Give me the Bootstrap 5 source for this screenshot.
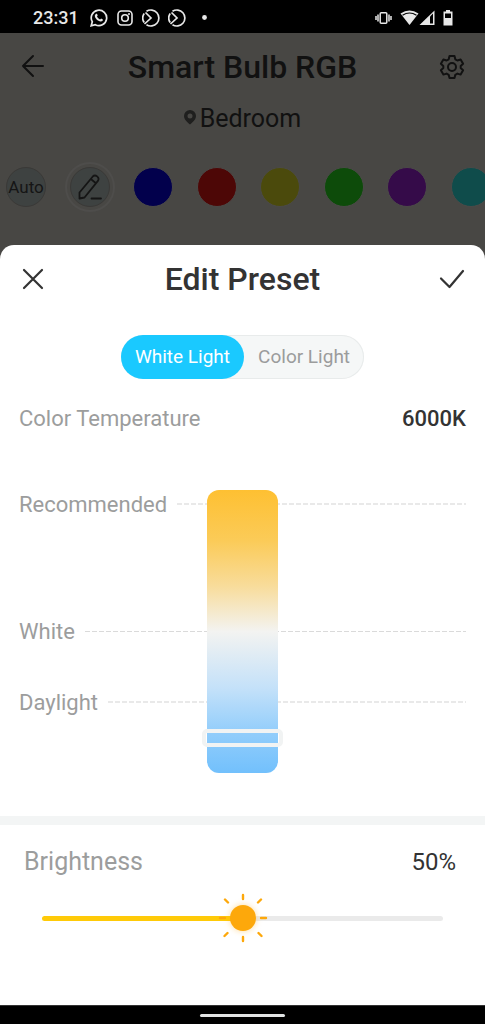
<!DOCTYPE html>
<html lang="en">
<head>
<meta charset="utf-8">
<meta name="viewport" content="width=device-width, initial-scale=1">
<title>Edit Preset</title>
<link href="https://cdn.jsdelivr.net/npm/bootstrap@5.3.0/dist/css/bootstrap.min.css" rel="stylesheet">
<style>
  body { font-family: Roboto, "Liberation Sans", sans-serif; background: #484744; color: #333; line-height: 1.2; }
  svg { display: block; fill: none; stroke: currentColor; }
  .status-bar { background: #000; color: #e8e8e8; height: 33px; padding: 2px 32px 0 33px; }
  .clock { font-size: 18px; font-weight: 500; margin-right: 11px; }
  .device { color: #111; height: 212px; }
  .top-row { height: 68px; padding: 0 20px; }
  .screen-title { font-size: 32px; font-weight: 500; }
  .plain-btn { width: 26px; height: 26px; padding: 0; border: 0; background: none; color: inherit; }
  .room { font-size: 25px; height: 32px; }
  .swatches { margin: 33px -6px 0 6px; height: 42px; }
  .swatch { width: 40px; height: 40px; padding: 0; border-radius: 50%; border: 1px solid #4b4a48; flex: none; }
  .swatch-tool { background: #3e4241; border-color: #3a3937; color: #151515; font-size: 17px; }
  .swatch-on { outline: 2px solid #4e4d4b; outline-offset: 3px; }
  .sheet { background: #fff; border-radius: 14px 14px 0 0; }
  .mode-tabs { background: #f5f7f7; box-shadow: inset 0 0 0 1px #e8ebeb; border-radius: 22px; }
  .mode-tab { height: 44px; border: 0; border-radius: 22px; padding: 0 14px; background: none; color: #9b9c9c; font-size: 19px; }
  .mode-tab.active { background: #1ac9ff; color: #fff; }
  .caption-row { padding: 0 19px; font-size: 22px; height: 28px; }
  .reading { font-weight: 500; }
  .dim { color: #9c9d9d; }
  .scale { display: grid; padding: 0 19px; margin-top: 57px; height: 283px; font-size: 22px; }
  .scale > * { grid-area: 1 / 1; }
  .tick { height: 28px; gap: 10px; }
  .tick span { padding-top: 3px; }
  .tick::after { content: ""; flex: 1; height: 2px; background: repeating-linear-gradient(90deg, #e9e9e9 0 5px, transparent 5px 7px); }
  .tick-mid::after { height: 1px; background: repeating-linear-gradient(90deg, #dadada 0 5px, transparent 5px 7px); }
  .tick-white { margin-top: 99px; }
  .tick-day { margin-top: 43px; }
  input[type=range] { appearance: none; -webkit-appearance: none; margin: 0; padding: 0; display: block; }
  .temp-range { writing-mode: vertical-lr; justify-self: center; position: relative; width: 71px; height: 283px; border-radius: 12px; background: linear-gradient(#fec032, #fbcb58 18%, #f8dc9b 34%, #f3f3f1 50%, #c4e1f9 70%, #94cefb 85%, #72c0fc); }
  .temp-range::-webkit-slider-runnable-track { width: 71px; height: 100%; }
  .temp-range::-webkit-slider-thumb { -webkit-appearance: none; width: 81px; height: 18px; margin-left: -5px; border: 4px solid #f1f3f3; border-radius: 5px; background: transparent; }
  .divider { height: 9px; margin: 43px 0 22px; background: #f3f5f5; }
  .bright-row { padding: 0 29px 0 24px; font-size: 25px; height: 30px; }
  .bright-row output { font-size: 24px; }
  .bright { padding: 0 42px; height: 50px; margin-top: 16px; }
  .bright-range { width: 100%; height: 26px; background: none; }
  .bright-range::-webkit-slider-runnable-track { height: 5px; border-radius: 3px; background: linear-gradient(90deg, #ffca08 50%, #eaeaea 50%); }
  .bright-range::-webkit-slider-thumb { -webkit-appearance: none; width: 26px; height: 26px; margin-top: -11px; border: 0; border-radius: 50%; background: #fda80b; box-shadow: 0 0 6px #fda80b66; }
  .rays { color: #fda80b; pointer-events: none; }
  .nav-pill { height: 19px; background: #000; box-shadow: inset 0 1px #333; }
  .nav-handle { width: 85px; height: 3px; border-radius: 2px; background: #e2e4e4; margin-top: 2px; }
</style>
</head>
<body>
<div class="min-vh-100 d-flex flex-column overflow-hidden">
  <div class="status-bar d-flex align-items-center justify-content-between">
    <div class="d-flex align-items-center">
      <span class="clock">23:31</span>
      <svg class="me-2" width="18" height="18" viewBox="0 0 18 18"><path d="M1.2 16.8l1.1-4A7.7 7.7 0 1 1 5.3 15.700z" stroke-width="1.7"/><path d="M5.600 5.200c.6-.8 1.300-.6 1.500-.1l.6 1.500-.7 1c.7 1.400 1.700 2.400 3.100 3l1-1 1.800.9c.2 1.300-1 2.100-2.200 2-3-.4-5.800-3.200-5.900-5.700 0-.6.300-1.200.8-1.600z" fill="currentColor" stroke="none"/></svg>
      <svg class="me-2" width="18" height="18" viewBox="0 0 18 18"><rect x="2" y="2" width="14" height="14" rx="3.500" stroke-width="1.600"/><circle cx="9" cy="9" r="3.300" stroke-width="1.600"/><circle cx="13" cy="5" r="1" fill="currentColor" stroke="none"/></svg>
      <svg class="me-2" width="18" height="18" viewBox="0 0 18 18" stroke-width="1.700"><path d="M4.500 2.300A8 8 0 1 1 4.500 15.700M2.200 13.500A8 8 0 0 1 2.200 4.500M3.500 3.500L9 9l-6.500 6"/></svg>
      <svg class="me-3" width="18" height="18" viewBox="0 0 18 18" stroke-width="1.700"><path d="M4.500 2.300A8 8 0 1 1 4.500 15.700M2.200 13.500A8 8 0 0 1 2.200 4.500M3.500 3.500L9 9l-6.500 6"/></svg>
      <svg width="5" height="5" viewBox="0 0 5 5"><circle cx="2.500" cy="2.500" r="2.400" fill="currentColor" stroke="none"/></svg>
    </div>
    <div class="d-flex align-items-center">
      <svg class="me-2" width="17" height="14" viewBox="0 0 17 14" stroke-width="1.500"><rect x="5.200" y="1.700" width="6.600" height="10.600" rx="1"/><path d="M3 3.500v7M14 3.500v7M1 5v4M16 5v4"/></svg>
      <svg width="19" height="16" viewBox="0 0 19 16"><path d="M.5 3.500Q9.500-2.500 18.500 3.500L9.500 15z" fill="currentColor" stroke="none"/><path d="M2.500 5.200Q9.500.8 16.500 5.200" stroke="#000" stroke-width="1.200"/></svg>
      <svg class="me-2" width="16" height="16" viewBox="0 0 16 16"><path d="M.5 15L15.500.5V15z" fill="currentColor" stroke="none"/><path d="M11 6.500l3-3v10h-3z" fill="#000" stroke="none"/></svg>
      <svg width="10" height="16" viewBox="0 0 10 16"><path d="M3 0h4v1.500h2.500v14h-9v-14H3zM2 3.500V8h6V3.500z" fill="currentColor" fill-rule="evenodd" stroke="none"/></svg>
    </div>
  </div>

  <header class="device">
    <div class="top-row d-flex align-items-center justify-content-between">
      <button class="plain-btn" aria-label="Back"><svg width="26" height="26" viewBox="0 0 26 26" stroke-width="2" stroke-linecap="round" stroke-linejoin="round"><path d="M23 12H3M13 2L3 12l10 10"/></svg></button>
      <h1 class="screen-title mb-0">Smart Bulb RGB</h1>
      <button class="plain-btn" aria-label="Settings"><svg width="26" height="26" viewBox="0 0 26 26" stroke-width="2" stroke-linejoin="round"><circle cx="13" cy="13" r="4"/><path d="M10.500 2h5l.8 3.300 2.100 1.200 3.200-1 2.500 4.300-2.400 2.200v2.100l2.400 2.200-2.500 4.300-3.200-1-2.100 1.200-.8 3.300h-5l-.8-3.300-2.100-1.200-3.200 1-2.500-4.300L4.300 14.100V12L1.900 9.800l2.500-4.300 3.200 1 2.100-1.200z"/></svg></button>
    </div>
    <div class="room d-flex align-items-center justify-content-center">
      <svg class="me-1" width="12" height="15" viewBox="0 0 12 15"><path d="M6 0a6 6 0 0 1 6 6c0 3.500-3.500 6.500-6 8.500-2.500-2-6-5-6-8.500a6 6 0 0 1 6-6zm0 3.500a2.500 2.500 0 1 0 0 5 2.500 2.500 0 0 0 0-5z" fill="#1f1f1e" fill-rule="evenodd" stroke="none"/></svg>
      <span class="pt-1">Bedroom</span>
    </div>
    <div class="swatches d-flex align-items-center justify-content-between">
      <button class="swatch swatch-tool">Auto</button>
      <button class="swatch swatch-tool swatch-on d-flex align-items-center justify-content-center" aria-label="Edit preset"><svg width="24" height="26" viewBox="0 0 24 26" stroke-width="1.800" stroke-linecap="round" stroke-linejoin="round"><path d="M1.500 24.500V18.500L14.600 2.700a3.400 3.400 0 0 1 5.300 4.200L6.500 23.500zM12.800 5l5.200 4.200M13.500 24.500h9.500"/></svg></button>
      <button class="swatch" style="background:#02004c" aria-label="Blue"></button>
      <button class="swatch" style="background:#4d0706" aria-label="Red"></button>
      <button class="swatch" style="background:#4b4a0c" aria-label="Yellow"></button>
      <button class="swatch" style="background:#0d4b0a" aria-label="Green"></button>
      <button class="swatch" style="background:#350b49" aria-label="Purple"></button>
      <button class="swatch" style="background:#0f4c4b" aria-label="Cyan"></button>
    </div>
  </header>

  <main class="sheet flex-grow-1">
    <div class="top-row d-flex align-items-center justify-content-between">
      <button class="plain-btn" aria-label="Close"><svg width="26" height="26" viewBox="0 0 26 26" stroke-width="2.200" stroke-linecap="round"><path d="M4 4l18 18M22 4L4 22"/></svg></button>
      <h2 class="screen-title mb-0">Edit Preset</h2>
      <button class="plain-btn" aria-label="Save"><svg width="26" height="26" viewBox="0 0 26 26" stroke-width="2.200" stroke-linecap="round" stroke-linejoin="round"><path d="M2 12.500l8.500 8.500L24 5"/></svg></button>
    </div>
    <div class="d-flex justify-content-center" style="padding:22px 0 26px">
      <div class="mode-tabs d-flex" role="tablist">
        <button class="mode-tab active" role="tab" aria-selected="true">White Light</button>
        <button class="mode-tab" role="tab" aria-selected="false">Color Light</button>
      </div>
    </div>
    <div class="caption-row d-flex align-items-center justify-content-between">
      <label class="dim" for="temp">Color Temperature</label>
      <output class="reading" for="temp">6000K</output>
    </div>
    <div class="scale">
      <div class="dim">
        <div class="tick d-flex align-items-center"><span>Recommended</span></div>
        <div class="tick tick-mid tick-white d-flex align-items-center"><span>White</span></div>
        <div class="tick tick-day d-flex align-items-center"><span>Daylight</span></div>
      </div>
      <input class="temp-range" id="temp" type="range" min="0" max="100" value="90">
    </div>
    <div class="divider"></div>
    <div class="bright-row d-flex align-items-center justify-content-between">
      <label class="dim" for="bright">Brightness</label>
      <output for="bright">50%</output>
    </div>
    <div class="bright position-relative d-flex align-items-center">
      <input class="bright-range" id="bright" type="range" min="0" max="100" value="50">
      <svg class="rays position-absolute top-50 start-50 translate-middle" width="50" height="50" viewBox="0 0 50 50" stroke-width="2.400" stroke-linecap="round"><path d="M25 2v4M25 44v4M2 25h5M43 25h5M7 6.500l3 3M43 6.500l-3 3M6.500 43l3-3M43.500 43l-3-3"/></svg>
    </div>
  </main>
  <footer class="nav-pill d-flex align-items-center justify-content-center"><div class="nav-handle"></div></footer>
</div>
<script src="https://cdn.jsdelivr.net/npm/bootstrap@5.3.0/dist/js/bootstrap.bundle.min.js"></script>
</body>
</html>
